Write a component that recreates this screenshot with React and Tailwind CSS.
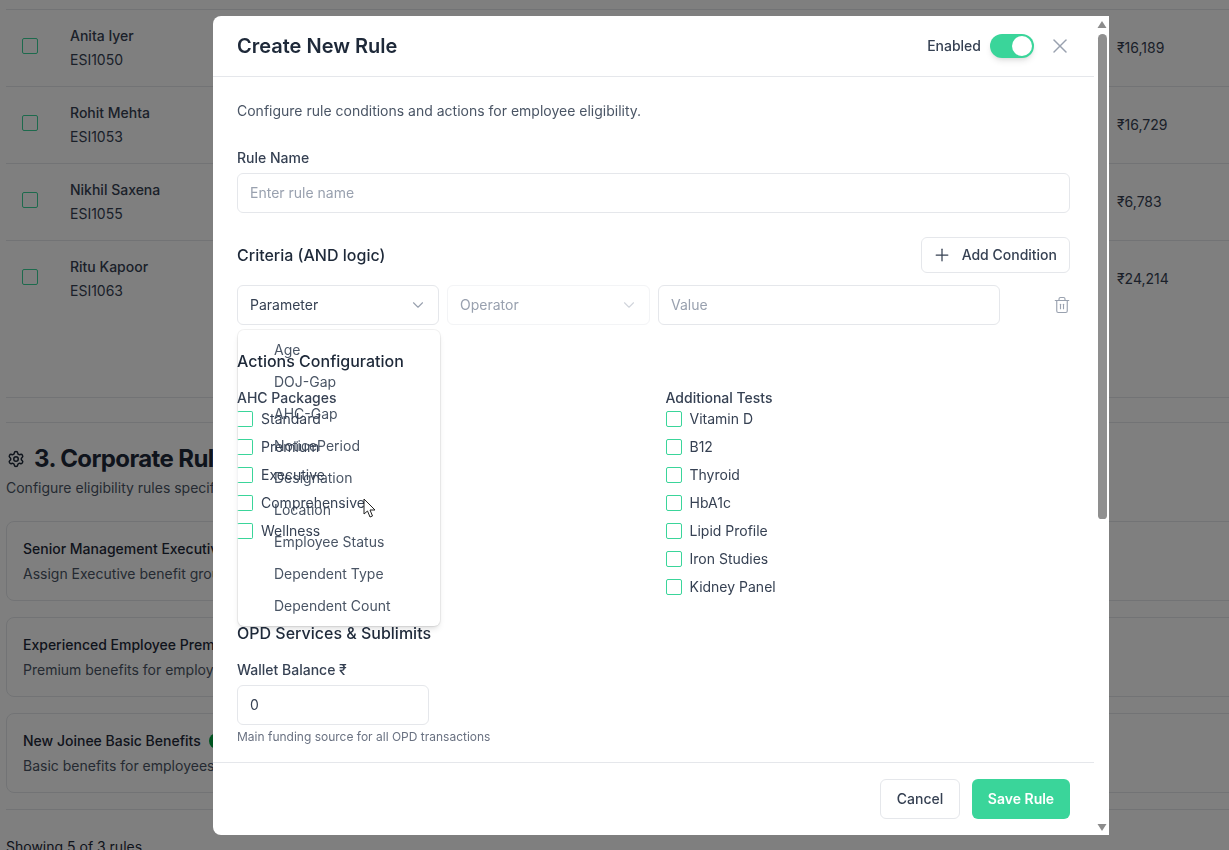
import React from 'react';
import { ChevronDown, Plus, Settings, Trash2, X } from 'lucide-react';

const employees = [
  { name: 'Anita Iyer', id: 'ESI1050', amount: '₹16,189' },
  { name: 'Rohit Mehta', id: 'ESI1053', amount: '₹16,729' },
  { name: 'Nikhil Saxena', id: 'ESI1055', amount: '₹6,783' },
  { name: 'Ritu Kapoor', id: 'ESI1063', amount: '₹24,214' },
];

const rules = [
  { title: 'Senior Management Executive', text: 'Assign Executive benefit group to senior management' },
  { title: 'Experienced Employee Premium', text: 'Premium benefits for employees with long tenure' },
  { title: 'New Joinee Basic Benefits', text: 'Basic benefits for employees in their first year' },
];

const parameters = ['Age', 'DOJ-Gap', 'AHC-Gap', 'NoticePeriod', 'Designation', 'Location', 'Employee Status', 'Dependent Type', 'Dependent Count'];
const packages = ['Standard', 'Premium', 'Executive', 'Comprehensive', 'Wellness'];
const tests = ['Vitamin D', 'B12', 'Thyroid', 'HbA1c', 'Lipid Profile', 'Iron Studies', 'Kidney Panel'];

function CheckRow({ label, underMenu }) {
  return (
    <label className="flex items-center gap-2 h-5 text-sm text-gray-700">
      <span className={`w-4 h-4 shrink-0 rounded-[2px] border border-[#3ad59a] ${underMenu ? 'border-l-gray-100' : ''}`} />
      {label}
    </label>
  );
}

function Background() {
  return (
    <div className="h-screen overflow-hidden bg-white pl-1.5 pt-[9px] text-gray-800">
      <div className="w-[1300px]">
        <div className="border-t border-gray-200">
          {employees.map((emp, i) => (
            <div
              key={emp.id}
              className={`grid grid-cols-[48px_1047px_auto] items-center h-[77px] px-4 border-b ${i < 3 ? 'border-gray-200' : 'border-transparent'}`}
            >
              <span className="w-4 h-4 mb-1 rounded-[2px] border border-[#3ad59a]" />
              <div className="text-sm text-gray-700">
                <div className="font-medium">{emp.name}</div>
                <div className="mt-1">{emp.id}</div>
              </div>
              <div className="text-sm text-gray-700">{emp.amount}</div>
            </div>
          ))}
        </div>
        <div className="mt-[79px] border-t border-gray-200 h-[25px]" />
        <div className="border-t border-gray-200 pt-5">
          <div className="flex items-center gap-[9px] ml-[1px]">
            <Settings size={18} />
            <h2 className="text-2xl font-bold tracking-tight">3. Corporate Rules</h2>
          </div>
          <p className="mt-[3px] text-sm text-gray-600">Configure eligibility rules specific to this corporate</p>
        </div>
        <div className="mt-[23px] flex flex-col gap-4 pb-4 border-b border-gray-200">
          {rules.map((rule) => (
            <div key={rule.title} className="h-[80px] rounded-lg border border-gray-200 px-4 pt-[17px]">
              <div className="flex items-center gap-2 text-sm font-medium">
                {rule.title}
                <span className="rounded-full bg-green-600 px-2 text-xs text-white">Active</span>
              </div>
              <p className="mt-[5px] text-sm text-gray-600">{rule.text}</p>
            </div>
          ))}
        </div>
        <p className="mt-[27px] text-sm">Showing 5 of 3 rules</p>
      </div>
    </div>
  );
}

function RuleModal() {
  return (
    <div className="fixed inset-0 bg-black/50 flex items-start justify-end pt-4 pr-[120px]">
      <div className="flex w-[896px] h-[819px] bg-white rounded-l-lg overflow-hidden">
        <div className="flex-1 min-w-0 flex flex-col">
          <div className="h-[61px] shrink-0 flex items-center justify-between px-6 border-b border-gray-200">
            <h2 className="text-xl font-semibold text-gray-800">Create New Rule</h2>
            <div className="flex items-center">
              <span className="text-sm font-medium text-gray-700">Enabled</span>
              <span className="ml-[9px] w-11 h-6 rounded-full bg-[#3ad59a] p-0.5 flex justify-end shadow-md">
                <span className="w-5 h-5 rounded-full bg-white" />
              </span>
              <X size={24} strokeWidth={1.5} className="ml-3.5 -mr-0.5 text-gray-400" />
            </div>
          </div>

          <div className="flex-1 min-h-0 overflow-hidden px-6 pt-6">
            <p className="text-sm text-gray-600">Configure rule conditions and actions for employee eligibility.</p>

            <label className="block mt-[27px] text-sm font-medium text-gray-700">Rule Name</label>
            <div className="mt-[5px] h-10 flex items-center px-3 rounded-md border border-gray-200 text-sm text-gray-400">
              Enter rule name
            </div>

            <div className="mt-6 flex items-center justify-between">
              <h3 className="text-base font-medium text-gray-800">Criteria (AND logic)</h3>
              <button className="h-9 flex items-center gap-2.5 pl-2.5 pr-3 rounded-md border border-gray-200 text-sm font-medium text-gray-700">
                <Plus size={20} strokeWidth={1.5} />
                Add Condition
              </button>
            </div>

            <div className="mt-3 flex items-center gap-2">
              <div className="relative w-[202px]">
                <div className="h-10 flex items-center justify-between pl-3 pr-[11px] rounded-md border border-gray-200 text-sm text-gray-700">
                  Parameter
                  <ChevronDown size={18} strokeWidth={1.5} className="text-gray-400" />
                </div>
                <ul className="absolute top-[45px] left-px w-[202px] py-1 bg-white rounded-md shadow-md ring-1 ring-black/5">
                  {parameters.map((item) => (
                    <li key={item} className="h-8 flex items-center pl-9 text-sm text-gray-600">{item}</li>
                  ))}
                </ul>
              </div>
              <div className="w-[203px] h-10 flex items-center justify-between pl-3 pr-[11px] rounded-md border border-gray-100 text-sm text-gray-400">
                Operator
                <ChevronDown size={18} strokeWidth={1.5} className="text-gray-300" />
              </div>
              <div className="w-[342px] h-10 flex items-center px-3 rounded-md border border-gray-200 text-sm text-gray-400">
                Value
              </div>
              <Trash2 size={18} strokeWidth={1.5} className="ml-auto -mr-px text-gray-400" />
            </div>

            <div className="relative mt-6">
              <h3 className="text-base font-medium text-gray-800">Actions Configuration</h3>
              <div className="mt-[15px] grid grid-cols-2 gap-x-6">
                <div>
                  <h4 className="text-sm font-medium text-gray-700">AHC Packages</h4>
                  <div className="mt-px flex flex-col gap-2">
                    {packages.map((item) => <CheckRow key={item} label={item} underMenu />)}
                  </div>
                </div>
                <div>
                  <h4 className="text-sm font-medium text-gray-700">Additional Tests</h4>
                  <div className="mt-px flex flex-col gap-2">
                    {tests.map((item) => <CheckRow key={item} label={item} />)}
                  </div>
                </div>
              </div>

              <h3 className="mt-6 text-base font-medium text-gray-800">OPD Services &amp; Sublimits</h3>
              <label className="block mt-[15px] text-sm font-medium text-gray-700">Wallet Balance ₹</label>
              <div className="mt-[5px] w-48 h-10 flex items-center px-3 rounded-md border border-gray-200 text-sm text-gray-700">0</div>
              <p className="mt-1 text-xs text-gray-500">Main funding source for all OPD transactions</p>
            </div>
          </div>

          <div className="shrink-0 flex justify-end gap-3 px-6 py-4 border-t border-gray-200">
            <button className="w-20 h-10 rounded-md border border-gray-200 text-sm font-medium text-gray-700">Cancel</button>
            <button className="w-[98px] h-10 rounded-md bg-[#3ad59a] text-sm font-semibold text-white">Save Rule</button>
          </div>
        </div>

        {/* scrollbar */}
        <div className="w-[15px] shrink-0 flex flex-col items-center pl-px">
          <svg width="10" height="18" viewBox="0 0 10 18" className="shrink-0"><path d="M5 5 L9.5 12 L0.5 12 Z" fill="#8c8c8c" /></svg>
          <div className="w-[9px] h-[485px] rounded-t-[5px] rounded-b-sm bg-[#8f8f8f]" />
          <svg width="10" height="14" viewBox="0 0 10 14" className="mt-auto shrink-0"><path d="M0.5 3 L9.5 3 L5 10 Z" fill="#8c8c8c" /></svg>
        </div>
      </div>

      {/* mouse pointer */}
      <svg width="14" height="22" viewBox="0 0 14 22" className="absolute left-[363px] top-[498px]">
        <path d="M1 1 L1 16 L4.5 13 L7 19 L9.5 18 L7 12 L12 12 Z" fill="#fff" stroke="#222" strokeWidth="1" strokeLinejoin="round" />
      </svg>
    </div>
  );
}

export default function App() {
  return (
    <div className="font-['Inter',sans-serif]">
      <Background />
      <RuleModal />
    </div>
  );
}
